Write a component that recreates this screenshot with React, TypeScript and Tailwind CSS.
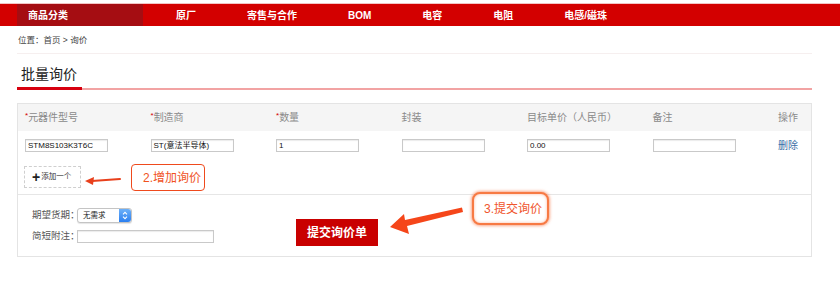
import React from 'react';

const navItems = ['原厂', '寄售与合作', 'BOM', '电容', '电阻', '电感/磁珠'];

const columns = [
  { label: '元器件型号', required: true, value: 'STM8S103K3T6C' },
  { label: '制造商', required: true, value: 'ST(意法半导体)' },
  { label: '数量', required: true, value: '1' },
  { label: '封装', required: false, value: '' },
  { label: '目标单价（人民币）', required: false, value: '0.00' },
  { label: '备注', required: false, value: '' },
];

const FakeInput = ({ value, width = 'w-[83px]' }: { value: string; width?: string }) => (
  <div className={`${width} shrink-0 h-[13px] border border-[#c9c9c9] bg-white shadow-[inset_0_1px_1px_rgba(0,0,0,0.08)] px-[2px] flex items-center text-[8px] text-[#111] leading-none whitespace-nowrap`}>
    {value}
  </div>
);

const App = () => {
  return (
    <div className="relative w-[840px] h-[288px] bg-white overflow-hidden font-['Liberation_Sans','Noto_Sans_CJK_SC',sans-serif]">
      <div className="h-[4px] border-b border-[#f3c4c4]" />

      {/* top nav */}
      <nav className="h-[22px] bg-[#d30000] flex items-center">
        <div className="ml-[17px] w-[126px] h-full bg-[#a50d12] pl-[11px] flex items-center text-white text-[10px] font-bold">
          商品分类
        </div>
        <div className="ml-[33px] flex items-center gap-[51px] text-white text-[10px] font-bold">
          {navItems.map(item => (
            <span key={item}>{item}</span>
          ))}
        </div>
      </nav>

      <div className="ml-[17px] mr-[28px]">
        {/* breadcrumb */}
        <div className="h-[28px] flex items-center pl-[1px] pt-[2px] text-[8.5px] text-[#444] border-b border-[#f6efef]">
          位置：首页 &gt; 询价
        </div>

        {/* title */}
        <div className="pt-[12px]">
          <h1 className="pl-[4px] text-[14px] leading-[17px] text-[#222]">批量询价</h1>
          <div className="mt-[4px] flex items-end">
            <div className="w-[65px] h-[3px] bg-[#d7000f]" />
            <div className="flex-1 h-[2px] bg-[#f2a3a3]" />
          </div>
        </div>

        {/* form box */}
        <div className="mt-[13px] border border-[#e4e4e4]">
          <div className="h-[27px] bg-[#f5f5f5] pl-[7px] grid grid-cols-[repeat(6,125.5px)_1fr] items-center text-[10px] text-[#8a8a8a]">
            {columns.map(col => (
              <div key={col.label} className="whitespace-nowrap">
                {col.required && <span className="text-[#d40000] text-[8px] align-top">*</span>}
                {col.label}
              </div>
            ))}
            <div>操作</div>
          </div>

          <div className="pl-[7px] pt-[8px] h-[21px] grid grid-cols-[repeat(6,125.5px)_1fr] items-center">
            {columns.map(col => (
              <FakeInput key={col.label} value={col.value} />
            ))}
            <div className="text-[10px] leading-[13px] text-[#3a6ea5]">删除</div>
          </div>

          <div className="pl-[6px] pt-[14px] pb-[6px] border-b border-[#e6e6e6]">
            <div className="w-[57px] h-[22px] border border-dashed border-[#cfcfcf] flex items-center pl-[7px] gap-[1px]">
              <span className="text-[14px] font-bold leading-none text-[#222]">+</span>
              <span className="text-[7.5px] leading-none text-[#333] whitespace-nowrap">添加一个</span>
            </div>
          </div>

          <div className="flex items-start pl-[14px] pt-[13px] pb-[10px]">
            <div className="flex flex-col gap-[7px]">
              <div className="flex items-center h-[15px]">
                <span className="w-[45px] shrink-0 whitespace-nowrap text-[9.5px] text-[#555]">期望货期：</span>
                <div className="w-[55px] h-[15px] flex rounded-[3px] border border-[#c4c4c4] bg-white shadow-[0_1px_1px_rgba(0,0,0,0.1)]">
                  <div className="flex-1 pl-[5px] flex items-center text-[7.5px] text-[#222] whitespace-nowrap">无需求</div>
                  <div className="w-[12px] rounded-r-[3px] bg-gradient-to-b from-[#6cb0f8] to-[#2a7ff0] flex items-center justify-center">
                    <svg width="6" height="9" viewBox="0 0 6 9">
                      <path d="M1 3.3 L3 1.3 L5 3.3 M1 5.7 L3 7.7 L5 5.7" stroke="white" strokeWidth="1.1" fill="none" />
                    </svg>
                  </div>
                </div>
              </div>
              <div className="flex items-center h-[13px]">
                <span className="w-[45px] shrink-0 whitespace-nowrap text-[9.5px] text-[#555]">简短附注：</span>
                <FakeInput value="" width="w-[137px]" />
              </div>
            </div>
            <button className="ml-[82px] mt-[11px] w-[82px] h-[27px] bg-[#c90000] text-white text-[12px] font-bold">
              提交询价单
            </button>
          </div>
        </div>
      </div>

      {/* annotations */}
      <div className="absolute left-[131px] top-[164px] w-[74px] h-[27px] rounded-[4px] border-[1.5px] border-[#ef4a1d] bg-white flex items-center pl-[11px] text-[12px] text-[#f0521e]">
        2.增加询价
      </div>
      <div className="absolute left-[472px] top-[192px] w-[77px] h-[33px] rounded-[8px] border-2 border-[#f77a44] bg-white shadow-[0_0_3px_1px_rgba(247,110,60,0.6),inset_0_0_3px_rgba(247,110,60,0.5)] flex items-center pl-[10px] text-[12px] text-[#f0552c]">
        3.提交询价
      </div>

      <svg className="absolute left-0 top-0 pointer-events-none" width="840" height="288" viewBox="0 0 840 288">
        <path d="M120 179 L92 181" stroke="#e8401c" strokeWidth="2" strokeLinecap="round" />
        <polygon points="85,181 94,177 93,185" fill="#e8401c" />
        <polygon points="462,207.5 463,212 407,226 409,234 390,227 404,214 405,220" fill="#f5461a" />
      </svg>
    </div>
  );
};

export default App;
